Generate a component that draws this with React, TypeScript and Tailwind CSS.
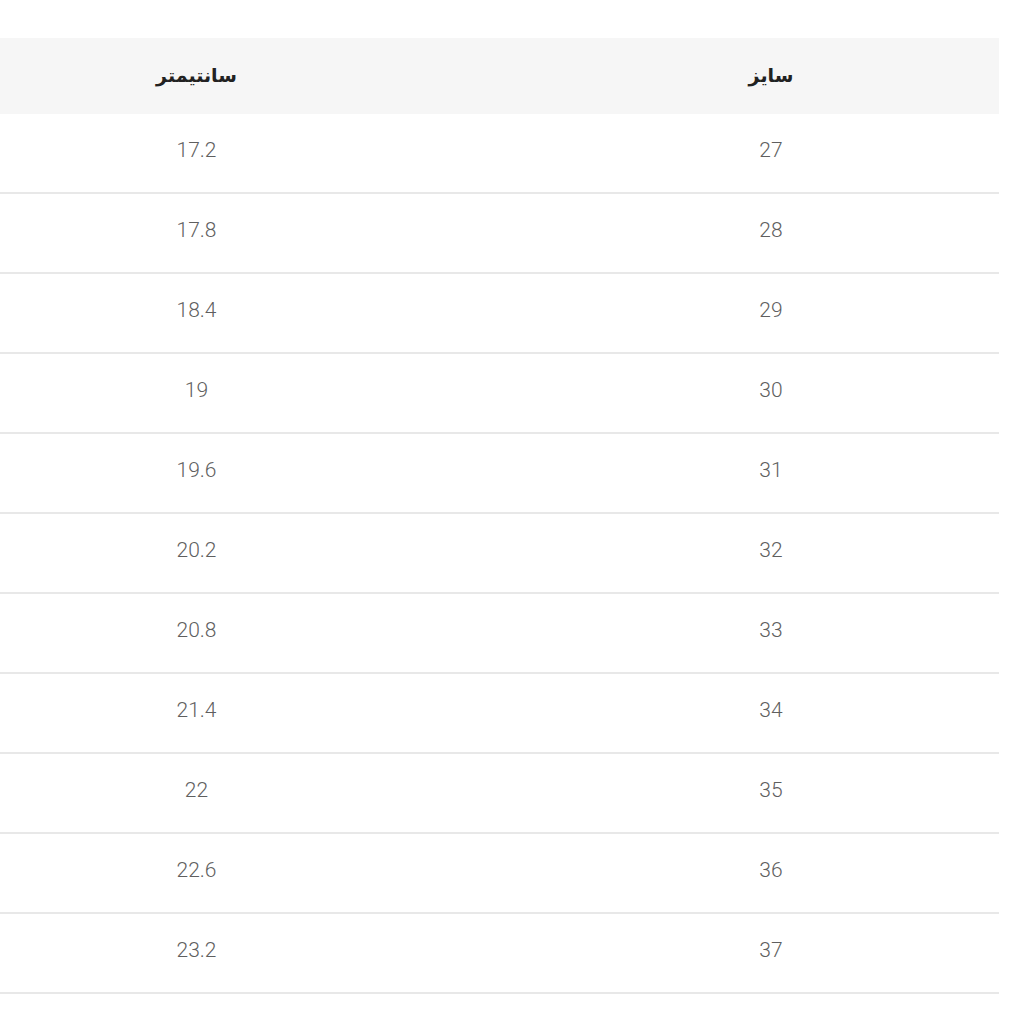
const rows: [string, string][] = [
  ["27", "17.2"],
  ["28", "17.8"],
  ["29", "18.4"],
  ["30", "19"],
  ["31", "19.6"],
  ["32", "20.2"],
  ["33", "20.8"],
  ["34", "21.4"],
  ["35", "22"],
  ["36", "22.6"],
  ["37", "23.2"],
];

export default function App() {
  return (
    <div className="min-h-screen bg-white pt-[38px]" style={{ fontFamily: "Roboto, 'DejaVu Sans', sans-serif" }}>
      <div dir="rtl" className="w-[999px]">
        <div className="grid h-[76px] grid-cols-[456px_1fr] bg-[#f6f6f6] text-[19px] font-bold text-[#222]" style={{ fontFamily: "'DejaVu Sans', sans-serif" }}>
          <div className="flex items-center justify-center pb-[2px]">سایز</div>
          <div className="flex items-center justify-center pb-[2px] pr-[150px]">سانتیمتر</div>
        </div>
        {rows.map(([size, cm]) => (
          <div key={size} className="grid h-[80px] grid-cols-[456px_1fr] border-b-2 border-[#e8e8e8] text-[21px] font-light text-[#5f5f5f]">
            <div className="flex items-center justify-center pb-[5px]">{size}</div>
            <div className="flex items-center justify-center pb-[5px] pr-[150px]">{cm}</div>
          </div>
        ))}
      </div>
    </div>
  );
}
